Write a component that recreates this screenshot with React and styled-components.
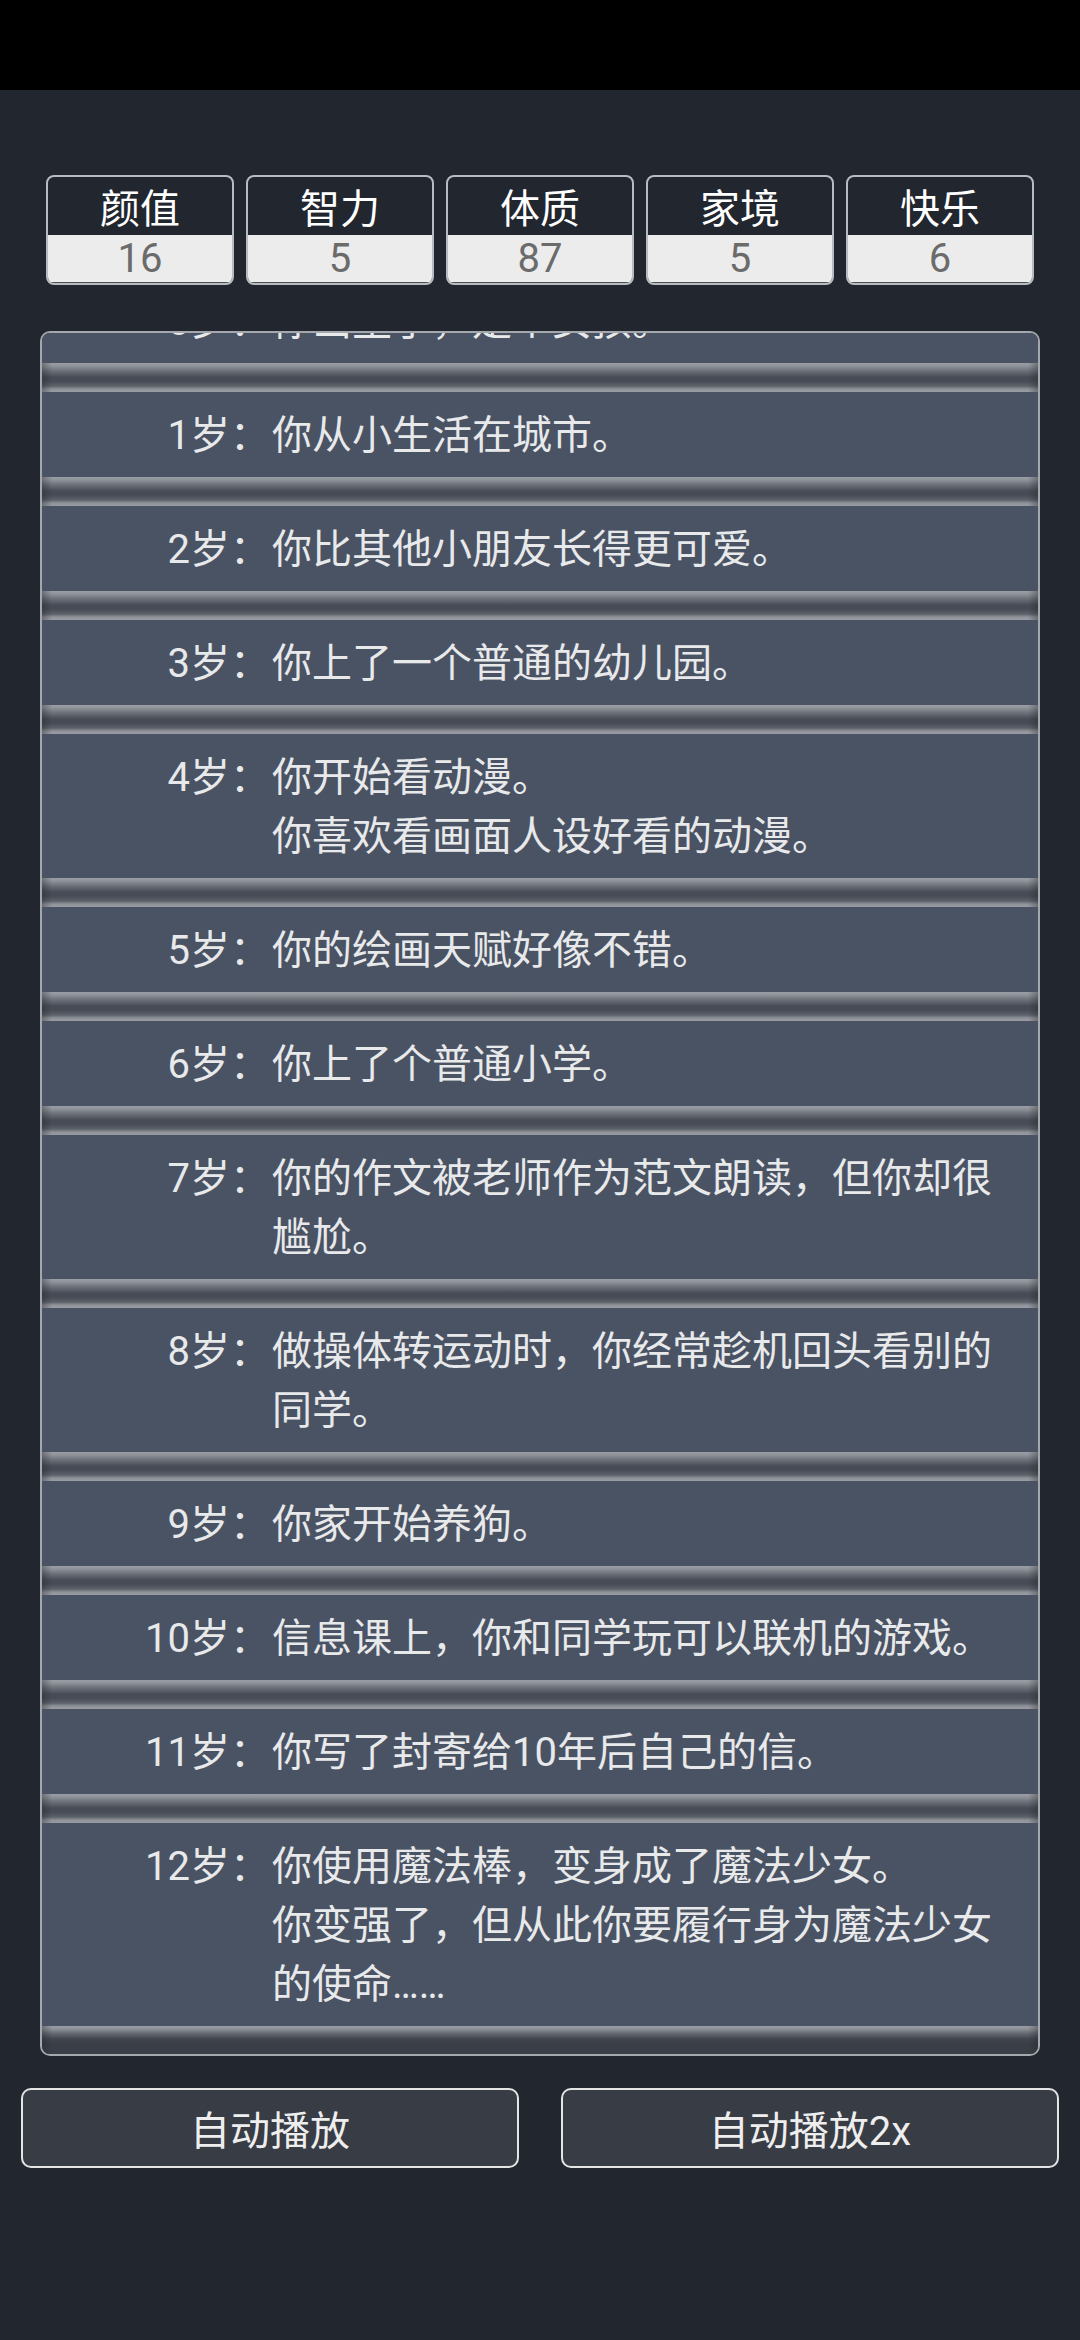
import React from "react";
import styled, { createGlobalStyle } from "styled-components";

const GlobalStyle = createGlobalStyle`
  body {
    margin: 0;
    background-color: #21262f;
    font-family: "Roboto", "Noto Sans CJK SC", sans-serif;
  }
`;

const Page = styled.div`
  min-height: 2340px;
  display: flex;
  flex-direction: column;
  background-color: #21262f;
`;

const StatusBar = styled.div`
  height: 90px;
  background-color: #000;
`;

const Stats = styled.div`
  display: flex;
  gap: 12px;
  padding: 85px 46px 0;
`;

const StatBox = styled.div`
  width: 188px;
  height: 110px;
  box-sizing: border-box;
  display: flex;
  flex-direction: column;
  border: 2px solid #b8bbbf;
  border-radius: 8px;
  overflow: hidden;
`;

const StatLabel = styled.div`
  height: 59px;
  display: flex;
  align-items: center;
  justify-content: center;
  color: #ffffff;
  font-size: 40px;
`;

const StatValue = styled.div`
  flex: 1;
  display: flex;
  align-items: center;
  justify-content: center;
  background-color: #ececec;
  border-bottom: 1px solid #4a4d52;
  color: #6b6b6b;
  font-size: 40px;
`;

const Panel = styled.div`
  margin: 46px 40px 0;
  height: 1725px;
  box-sizing: border-box;
  border: 2px solid #a4a7ab;
  border-radius: 10px;
  overflow: hidden;
  background-color: #3a3e47;
`;

const List = styled.div`
  margin-top: -55px;
`;

const Row = styled.div`
  display: flex;
  padding: 14px 24px 12px 0;
  background-color: #4a5363;
  color: #e8e9eb;
  font-size: 40px;
  line-height: 59px;
`;

const Age = styled.div`
  width: 228px;
  flex-shrink: 0;
  text-align: right;
`;

const Events = styled.div`
  flex: 1;
  padding-left: 2px;
`;

const Divider = styled.div`
  height: 29px;
  background:
    linear-gradient(
      to right,
      rgba(30, 34, 40, 0.35) 0,
      rgba(30, 34, 40, 0) 10px,
      rgba(30, 34, 40, 0) calc(100% - 10px),
      rgba(30, 34, 40, 0.35) 100%
    ),
    ${(p) =>
      p.$last
        ? "linear-gradient(to bottom, #9a9ea4 0, #8c9097 3px, #60656e 8px, #41454e 13px, #3a3e47 18px, #3a3e47 100%)"
        : "linear-gradient(to bottom, #9b9fa5 0, #8e9299 3px, #6a6f78 8px, #474c56 14px, #464b55 18px, #5c616a 23px, #8e9298 26px, #9a9ea4 29px)"};
`;

const Controls = styled.div`
  display: flex;
  gap: 42px;
  padding: 32px 21px 0;
`;

const Button = styled.button`
  flex: 1;
  height: 80px;
  background-color: #383c45;
  border: 2px solid #e4e4e4;
  border-radius: 10px;
  color: #eeeeee;
  font-family: "Roboto", "Noto Sans CJK SC", sans-serif;
  font-size: 40px;
  padding: 0;
`;

const stats = [
  { label: "颜值", value: 16 },
  { label: "智力", value: 5 },
  { label: "体质", value: 87 },
  { label: "家境", value: 5 },
  { label: "快乐", value: 6 },
];

const life = [
  { age: 0, events: ["你出生了，是个女孩。"] },
  { age: 1, events: ["你从小生活在城市。"] },
  { age: 2, events: ["你比其他小朋友长得更可爱。"] },
  { age: 3, events: ["你上了一个普通的幼儿园。"] },
  { age: 4, events: ["你开始看动漫。", "你喜欢看画面人设好看的动漫。"] },
  { age: 5, events: ["你的绘画天赋好像不错。"] },
  { age: 6, events: ["你上了个普通小学。"] },
  { age: 7, events: ["你的作文被老师作为范文朗读，但你却很尴尬。"] },
  { age: 8, events: ["做操体转运动时，你经常趁机回头看别的同学。"] },
  { age: 9, events: ["你家开始养狗。"] },
  { age: 10, events: ["信息课上，你和同学玩可以联机的游戏。"] },
  { age: 11, events: ["你写了封寄给10年后自己的信。"] },
  {
    age: 12,
    events: [
      "你使用魔法棒，变身成了魔法少女。",
      "你变强了，但从此你要履行身为魔法少女的使命……",
    ],
  },
];

const App = () => {
  return (
    <Page>
      <GlobalStyle />
      <StatusBar />
      <Stats>
        {stats.map((s) => (
          <StatBox key={s.label}>
            <StatLabel>{s.label}</StatLabel>
            <StatValue>{s.value}</StatValue>
          </StatBox>
        ))}
      </Stats>
      <Panel>
        <List>
          {life.map((item, i) => (
            <React.Fragment key={item.age}>
              <Row>
                <Age>{item.age}岁：</Age>
                <Events>
                  {item.events.map((e) => (
                    <div key={e}>{e}</div>
                  ))}
                </Events>
              </Row>
              <Divider $last={i === life.length - 1} />
            </React.Fragment>
          ))}
        </List>
      </Panel>
      <Controls>
        <Button>自动播放</Button>
        <Button>自动播放2x</Button>
      </Controls>
    </Page>
  );
};

export default App;
